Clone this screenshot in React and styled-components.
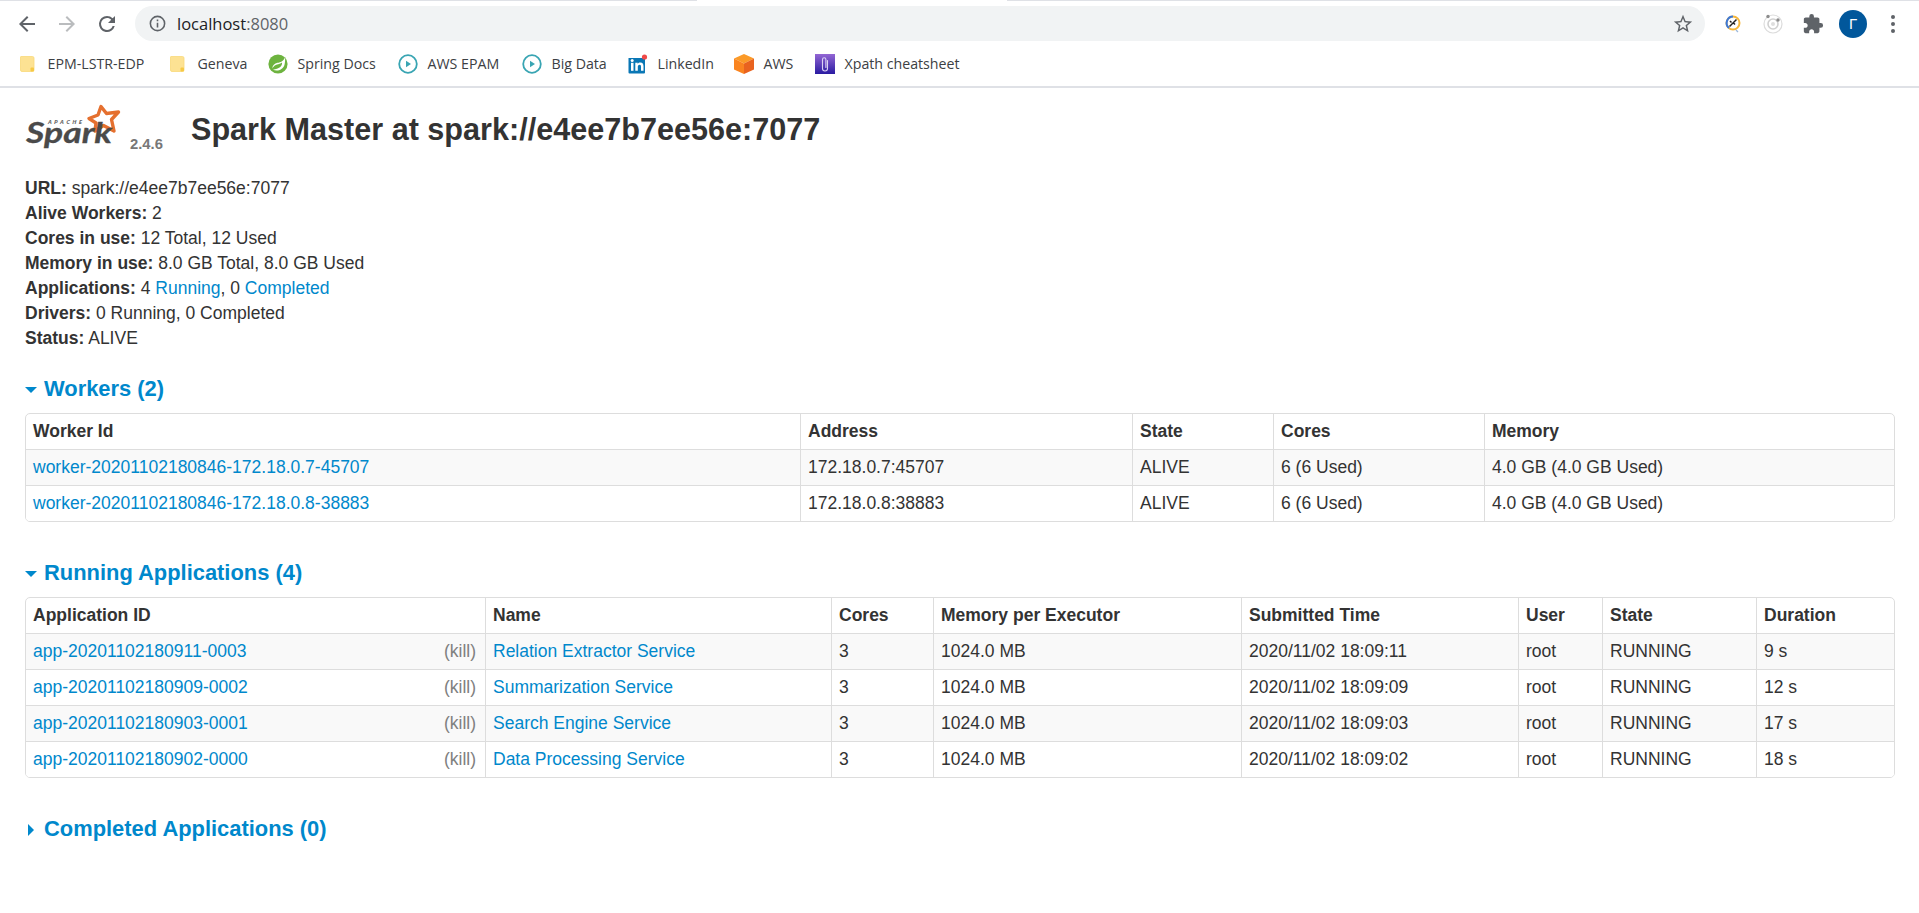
import React from 'react';
import styled, { createGlobalStyle } from 'styled-components';
import { MdExtension } from 'react-icons/md';

const Global = createGlobalStyle`
  html, body { margin: 0; padding: 0; background: #fff; }
  body { font-family: "Liberation Sans", Arial, sans-serif; font-size: 17.5px; line-height: 25px; color: #333; }
  * { box-sizing: border-box; }
`;

const Browser = styled.header`
  height: 88px;
  border-bottom: 2px solid #dfe1e6;
  display: flex;
  flex-direction: column;
`;
const TabStrip = styled.div`
  height: 1px;
  display: grid;
  grid-template-columns: 697px 310px 1fr;
`;
const TabEdge = styled.div`
  background: ${p => (p.$open ? '#fff' : '#dfe1e6')};
`;
const Toolbar = styled.div`
  height: 40px;
  padding: 5px 6px 0 7px;
  display: flex;
  align-items: flex-start;
`;
const ToolButton = styled.div`
  width: 40px;
  height: 35px;
  flex: none;
  display: flex;
  align-items: center;
  justify-content: center;
  color: ${p => p.$color || '#5f6368'};
`;
const NavGroup = styled.div`
  display: flex;
  margin-right: 8px;
`;
const Omnibox = styled.div`
  flex: 1;
  height: 35px;
  margin-right: 8px;
  border-radius: 18px;
  background: #f1f3f4;
  display: flex;
  align-items: center;
  padding: 0 11px 0 13px;
  font-family: "Open Sans", sans-serif;
  font-size: 16.5px;
`;
const UrlHost = styled.span`
  margin-left: 10px;
  color: #202124;
`;
const UrlPort = styled.span`
  color: #5f6368;
  flex: 1;
`;
const Avatar = styled.div`
  width: 28px;
  height: 28px;
  border-radius: 50%;
  background: #01579b;
  color: #fff;
  display: flex;
  align-items: center;
  justify-content: center;
  font-size: 15px;
`;
const Bookmarks = styled.nav`
  height: 45px;
  padding-left: 18px;
  display: flex;
  align-items: center;
  font-family: "Open Sans", sans-serif;
  font-size: 14.2px;
  color: #3c4043;
`;
const Bookmark = styled.div`
  width: ${p => p.$w}px;
  flex: none;
  display: flex;
  align-items: center;
  gap: 9.5px;
  white-space: nowrap;
`;
const BookmarkIcon = styled.svg`
  width: 20px;
  height: 20px;
  flex: none;
`;

const Page = styled.main`
  padding: 0 26px 0 25px;
`;
const Hero = styled.div`
  height: 88px;
  display: flex;
  align-items: flex-start;
`;
const LogoBox = styled.div`
  width: 105px;
  height: 52px;
  margin-top: 12px;
  flex: none;
`;
const Version = styled.span`
  width: 61px;
  flex: none;
  margin-top: 44px;
  font-size: 14.8px;
  font-weight: 700;
  color: #777;
`;
const Title = styled.h3`
  margin: 23px 0 0;
  font-size: 30.6px;
  line-height: 37px;
  font-weight: 700;
  color: #333;
`;
const Summary = styled.ul`
  list-style: none;
  margin: 0;
  padding: 0;
`;
const Label = styled.strong`
  font-weight: 700;
`;
const Link = styled.a`
  color: #0088cc;
  text-decoration: none;
`;
const Heading = styled.h4`
  margin: ${p => p.$top}px 0 ${p => p.$bottom}px;
  height: 25px;
  display: flex;
  align-items: center;
  font-size: 21.9px;
  line-height: 25px;
  font-weight: 700;
  color: #0088cc;
`;
const Caret = styled.span`
  width: 19px;
  flex: none;
  display: flex;
  padding-left: ${p => (p.$open ? 0 : 3)}px;
  margin-top: 2px;
  &::before {
    content: "";
    width: 0;
    height: 0;
    ${p => p.$open
      ? 'border-left: 6.5px solid transparent; border-right: 6.5px solid transparent; border-top: 6.5px solid #0088cc;'
      : 'border-top: 6.5px solid transparent; border-bottom: 6.5px solid transparent; border-left: 6.5px solid #0088cc;'}
  }
`;
const Table = styled.table`
  width: 100%;
  table-layout: fixed;
  border-collapse: separate;
  border-spacing: 0;
  border: 1px solid #ddd;
  border-radius: 5px;
  overflow: hidden;
`;
const Th = styled.th`
  height: 35px;
  padding: 0 7px;
  text-align: left;
  font-weight: 700;
  border-left: ${p => (p.$first ? 0 : '1px solid #ddd')};
`;
const Td = styled.td`
  height: 36px;
  padding: 0 7px;
  border-top: 1px solid #ddd;
  border-left: ${p => (p.$first ? 0 : '1px solid #ddd')};
  white-space: nowrap;
`;
const Row = styled.tr`
  background: ${p => (p.$odd ? '#f9f9f9' : '#fff')};
`;
const Kill = styled.a`
  float: right;
  margin-right: 2px;
  color: gray;
  text-decoration: none;
`;

const Folder = () => (
  <BookmarkIcon viewBox="0 0 20 20">
    <path d="M3 2.500h11.500a1.500 1.500 0 0 1 1.500 1.500v12a1.500 1.500 0 0 1-1.500 1.500H4a1.500 1.500 0 0 1-1.500-1.500V3A.5.5 0 0 1 3 2.500z" fill="#fde293" stroke="#f9d97a" strokeWidth=".8" />
    <rect x="12.500" y="13.500" width="3.500" height="4" rx="1" fill="#f6c945" />
  </BookmarkIcon>
);
const Spring = () => (
  <BookmarkIcon viewBox="0 0 20 20">
    <circle cx="10" cy="10" r="9.600" fill="#6db33f" />
    <path d="M17 3c-1 4-4.500 5.500-7.500 5.800C6.500 9.200 4.500 11.500 4.300 14.500 7 9.500 11 11 14 8.500c.6 3.500-3 6.500-9 7.200 4 1.800 10 .5 11.500-5 .6-2.500.8-5 .5-7.700z" fill="#fff" />
  </BookmarkIcon>
);
const Play = () => (
  <BookmarkIcon viewBox="0 0 20 20">
    <circle cx="10" cy="10" r="8.800" fill="none" stroke="#39a5b3" strokeWidth="1.800" />
    <path d="M8 6.800v6.400l5-3.200z" fill="#39a5b3" />
  </BookmarkIcon>
);
const LinkedIn = () => (
  <BookmarkIcon viewBox="0 0 20 20">
    <path d="M.5 4H17v14.500a1 1 0 0 1-1 1H1.500a1 1 0 0 1-1-1z" fill="#0a77b5" />
    <rect x="3" y="8.800" width="2.500" height="8" fill="#fff" />
    <circle cx="4.200" cy="6.600" r="1.500" fill="#fff" />
    <path d="M7.300 8.800h2.400v1.200c.6-.9 1.500-1.400 2.700-1.400 2.200 0 3.100 1.400 3.100 3.700v4.500h-2.500v-4.100c0-1.200-.4-1.900-1.300-1.900-1 0-1.900.7-1.900 2v4H7.300z" fill="#fff" />
    <circle cx="16.500" cy="3" r="2.600" fill="#f04a48" />
  </BookmarkIcon>
);
const Cube = () => (
  <BookmarkIcon viewBox="0 0 20 20">
    <path d="M10 0l10 4.500-10 5-10-5z" fill="#fb9a28" />
    <path d="M0 4.500l10 5V20L0 15.500z" fill="#fa8420" />
    <path d="M20 4.500l-10 5V20l10-4.500z" fill="#e9631f" />
  </BookmarkIcon>
);
const Clip = () => (
  <BookmarkIcon viewBox="0 0 20 20">
    <defs>
      <linearGradient id="clipBg" x1="0" y1="0" x2="0" y2="1">
        <stop offset="0" stopColor="#9366d4" />
        <stop offset="1" stopColor="#2a1ba2" />
      </linearGradient>
    </defs>
    <rect width="20" height="20" fill="url(#clipBg)" />
    <path d="M12.500 6.500v8a2.500 2.500 0 0 1-5 0V5.500a1.700 1.700 0 0 1 3.400 0v8" fill="none" stroke="#dcd3f4" strokeWidth="1.100" strokeLinecap="round" />
  </BookmarkIcon>
);

const Logo = () => (
  <svg width="105" height="54" viewBox="0 0 105 54">
    <path fill="none" stroke="#e5702f" strokeWidth="3.400" strokeLinejoin="round"
      d="M76 6.500L81.500 13.500 93.500 12 86.500 19.500 89 31 78.500 25.500 70 31 71 23 64 18.500 73 15z" />
    <text x="23" y="24" fontFamily="Open Sans, sans-serif" fontSize="6" fontWeight="700" fontStyle="italic" fill="#666" textLength="34">APACHE</text>
    <text x="1" y="43" fontFamily="Lato, sans-serif" fontSize="29" fontWeight="700" fontStyle="italic" fill="#4a4a4a" stroke="#4a4a4a" strokeWidth=".3" textLength="86" lengthAdjust="spacingAndGlyphs">Spark</text>
  </svg>
);

const workers = [
  ['worker-20201102180846-172.18.0.7-45707', '172.18.0.7:45707'],
  ['worker-20201102180846-172.18.0.8-38883', '172.18.0.8:38883'],
];
const apps = [
  ['app-20201102180911-0003', 'Relation Extractor Service', '2020/11/02 18:09:11', '9 s'],
  ['app-20201102180909-0002', 'Summarization Service', '2020/11/02 18:09:09', '12 s'],
  ['app-20201102180903-0001', 'Search Engine Service', '2020/11/02 18:09:03', '17 s'],
  ['app-20201102180902-0000', 'Data Processing Service', '2020/11/02 18:09:02', '18 s'],
];
const workerCols = [774, 332, 141, 211, 410];
const appCols = [459, 346, 102, 308, 277, 84, 154, 138];
const Cols = ({ widths }) => (
  <colgroup>{widths.map((w, i) => <col key={i} style={{ width: w }} />)}</colgroup>
);

const marks = [
  ['EPM-LSTR-EDP', Folder, 150],
  ['Geneva', Folder, 100],
  ['Spring Docs', Spring, 130],
  ['AWS EPAM', Play, 124],
  ['Big Data', Play, 106],
  ['LinkedIn', LinkedIn, 106],
  ['AWS', Cube, 81],
  ['Xpath cheatsheet', Clip, 170],
];

export default function App() {
  return (
    <>
      <Global />
      <Browser>
        <TabStrip><TabEdge /><TabEdge $open /><TabEdge /></TabStrip>
        <Toolbar>
          <NavGroup>
            <ToolButton><svg width="24" height="24" viewBox="0 0 24 24" fill="currentColor"><path d="M20 11H7.830l5.590-5.590L12 4l-8 8 8 8 1.410-1.410L7.830 13H20z" /></svg></ToolButton>
            <ToolButton $color="#babcbe"><svg width="24" height="24" viewBox="0 0 24 24" fill="currentColor"><path d="M4 11h12.170l-5.590-5.590L12 4l8 8-8 8-1.410-1.410L16.170 13H4z" /></svg></ToolButton>
            <ToolButton><svg width="24" height="24" viewBox="0 0 24 24" fill="currentColor"><path d="M17.650 6.350A7.960 7.960 0 0 0 12 4a8 8 0 1 0 7.730 10h-2.080A6 6 0 1 1 12 6c1.660 0 3.140.690 4.220 1.780L13 11h7V4z" /></svg></ToolButton>
          </NavGroup>
          <Omnibox>
            <svg width="19" height="19" viewBox="0 0 24 24" fill="#5f6368"><path d="M11 7h2v2h-2zm0 4h2v6h-2zm1-9a10 10 0 1 0 0 20 10 10 0 0 0 0-20zm0 18a8 8 0 1 1 0-16 8 8 0 0 1 0 16z" /></svg>
            <UrlHost>localhost</UrlHost><UrlPort>:8080</UrlPort>
            <svg width="22" height="22" viewBox="0 0 24 24" fill="#5f6368"><path d="M22 9.240l-7.190-.620L12 2 9.190 8.630 2 9.240l5.460 4.730L5.820 21 12 17.270 18.180 21l-1.630-7.030zM12 15.400l-3.760 2.270 1-4.280-3.320-2.880 4.380-.380L12 6.100l1.710 4.040 4.380.380-3.320 2.880 1 4.280z" /></svg>
          </Omnibox>
          <ToolButton>
            <svg width="18" height="20" viewBox="0 0 18 20">
              <circle cx="9" cy="9" r="6.500" fill="none" stroke="#f6b73c" strokeWidth="2" />
              <path d="M9 2.500A6.500 6.500 0 0 0 5 14" fill="none" stroke="#3b78d8" strokeWidth="2" />
              <path d="M5.500 12.500l7-7M6 7l1.500 1.500M11 10.500l-1.500-1.500" stroke="#222" strokeWidth="1.500" />
              <path d="M12 16l2 2" stroke="#9bb8dc" strokeWidth="1.200" />
            </svg>
          </ToolButton>
          <ToolButton>
            <svg width="20" height="20" viewBox="0 0 20 20">
              <circle cx="10" cy="10" r="9" fill="none" stroke="#dcdcdc" strokeWidth="1.200" />
              <circle cx="10" cy="10" r="5" fill="none" stroke="#d0d0d0" strokeWidth="1.600" />
              <circle cx="10" cy="10" r="2" fill="#dedede" />
              <circle cx="5" cy="2.500" r="1.700" fill="#8c8c8c" />
              <circle cx="15" cy="6" r="1.700" fill="#8c8c8c" />
            </svg>
          </ToolButton>
          <ToolButton><MdExtension size={22} /></ToolButton>
          <ToolButton><Avatar>Г</Avatar></ToolButton>
          <ToolButton>
            <svg width="6" height="20" viewBox="0 0 6 20" fill="#5f6368"><circle cx="3" cy="3" r="2" /><circle cx="3" cy="10" r="2" /><circle cx="3" cy="17" r="2" /></svg>
          </ToolButton>
        </Toolbar>
        <Bookmarks>
          {marks.map(([name, Icon, w]) => (
            <Bookmark key={name} $w={w}><Icon />{name}</Bookmark>
          ))}
        </Bookmarks>
      </Browser>
      <Page>
        <Hero>
          <LogoBox><Logo /></LogoBox>
          <Version>2.4.6</Version>
          <Title>Spark Master at spark://e4ee7b7ee56e:7077</Title>
        </Hero>
        <Summary>
          <li><Label>URL:</Label> spark://e4ee7b7ee56e:7077</li>
          <li><Label>Alive Workers:</Label> 2</li>
          <li><Label>Cores in use:</Label> 12 Total, 12 Used</li>
          <li><Label>Memory in use:</Label> 8.0 GB Total, 8.0 GB Used</li>
          <li><Label>Applications:</Label> 4 <Link>Running</Link>, 0 <Link>Completed</Link></li>
          <li><Label>Drivers:</Label> 0 Running, 0 Completed</li>
          <li><Label>Status:</Label> ALIVE</li>
        </Summary>
        <Heading $top={25} $bottom={12}><Caret $open />Workers (2)</Heading>
        <Table>
          <Cols widths={workerCols} />
          <thead><tr>
            {['Worker Id', 'Address', 'State', 'Cores', 'Memory'].map((h, i) => <Th key={h} $first={i === 0}>{h}</Th>)}
          </tr></thead>
          <tbody>
            {workers.map(([id, addr], i) => (
              <Row key={id} $odd={i % 2 === 0}>
                <Td $first><Link>{id}</Link></Td>
                <Td>{addr}</Td>
                <Td>ALIVE</Td>
                <Td>6 (6 Used)</Td>
                <Td>4.0 GB (4.0 GB Used)</Td>
              </Row>
            ))}
          </tbody>
        </Table>
        <Heading $top={38} $bottom={12}><Caret $open />Running Applications (4)</Heading>
        <Table>
          <Cols widths={appCols} />
          <thead><tr>
            {['Application ID', 'Name', 'Cores', 'Memory per Executor', 'Submitted Time', 'User', 'State', 'Duration'].map((h, i) => <Th key={h} $first={i === 0}>{h}</Th>)}
          </tr></thead>
          <tbody>
            {apps.map(([id, name, time, dur], i) => (
              <Row key={id} $odd={i % 2 === 0}>
                <Td $first><Link>{id}</Link><Kill>(kill)</Kill></Td>
                <Td><Link>{name}</Link></Td>
                <Td>3</Td>
                <Td>1024.0 MB</Td>
                <Td>{time}</Td>
                <Td>root</Td>
                <Td>RUNNING</Td>
                <Td>{dur}</Td>
              </Row>
            ))}
          </tbody>
        </Table>
        <Heading $top={38} $bottom={0}><Caret />Completed Applications (0)</Heading>
      </Page>
    </>
  );
}
